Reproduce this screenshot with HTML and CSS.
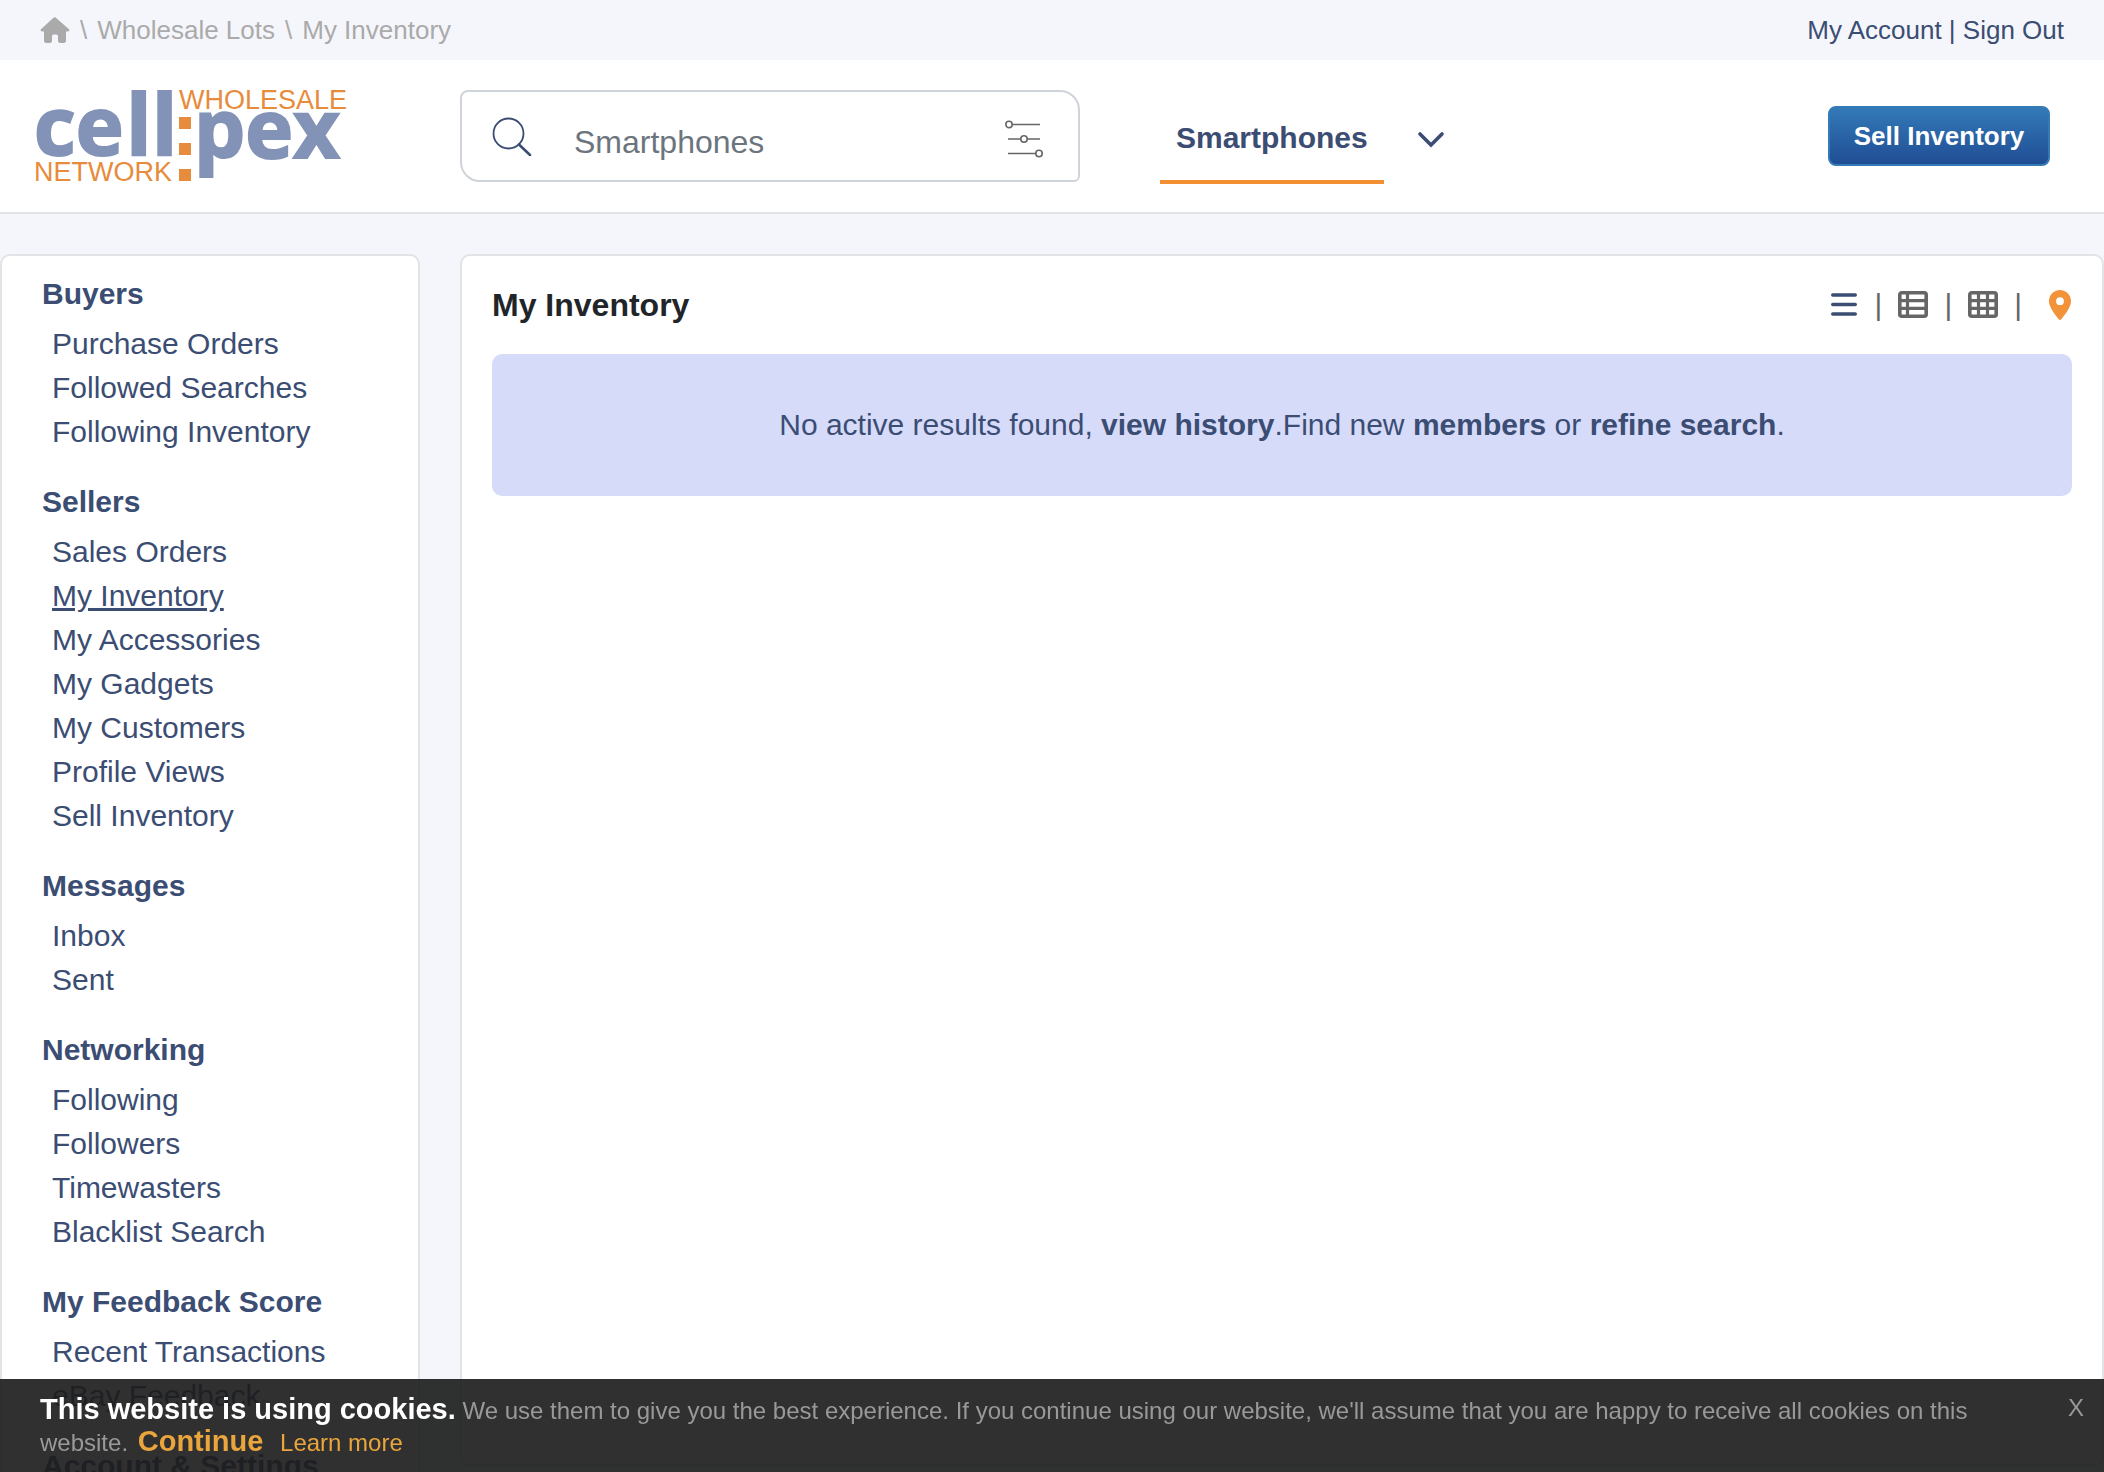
FILE: index.html
```html
<!DOCTYPE html>
<html lang="en">
<head>
<meta charset="utf-8">
<title>My Inventory - Cellpex</title>
<link rel="stylesheet" href="styles.css">
</head>
<body>
<div class="topbar">
  <nav class="crumbs" aria-label="Breadcrumb">
    <a href="#" aria-label="Home"><svg class="home" width="30" height="28" viewBox="0 0 30 28"><path d="M15 1 29.300 13.500Q30 15 28 15.500H26V24.500Q26 27 23.500 27H20.500Q18 27 18 24.500V20Q18 18.500 16.500 18.500H13.500Q12 18.500 12 20V24.500Q12 27 9.500 27H6.500Q4 27 4 24.500V15.500H2Q0 15 .7 13.500L13.500 1.800Q15 .5 16.500 1.800Z"/></svg></a>
    <span>\</span>
    <a href="#">Wholesale Lots</a>
    <span>\</span>
    <span>My Inventory</span>
  </nav>
  <div class="account"><a href="#">My Account</a> | <a href="#">Sign Out</a></div>
</div>

<header class="header">
  <a class="logo" href="#" aria-label="Cellpex Wholesale Network">
    <svg width="310" height="94" viewBox="0 0 310 94">
      <g class="logo-name">
        <text x="-2" y="65" font-size="81">ce</text>
        <text x="90" y="65" font-size="84">ll</text>
        <text x="158" y="68" font-size="81">pex</text>
      </g>
      <g class="logo-tag">
        <text x="143" y="19">WHOLESALE</text>
        <text x="-2" y="91">NETWORK</text>
        <path d="M143 27h12v12h-12zM143 53h12v12h-12zM143 79h12v12h-12z"/>
      </g>
    </svg>
  </a>
  <form class="search">
    <button type="button" aria-label="Search"><svg width="40" height="40" viewBox="0 0 40 40" fill="none" stroke="#3b4d73"><circle cx="16.500" cy="17.500" r="15" stroke-width="1.800"/><path d="M27 28.500 38 39" stroke-width="2.600" stroke-linecap="round"/></svg></button>
    <input type="text" placeholder="Smartphones" aria-label="Search smartphones">
    <button type="button" aria-label="Filters"><svg width="40" height="46" viewBox="0 -6 40 46" fill="none" stroke="#666" stroke-width="1.600"><path d="M8.500 5.500H36M4 20h13M23 20h13M4 34.500h28"/><circle cx="5" cy="5.500" r="3.200"/><circle cx="20" cy="20" r="3.200"/><circle cx="35" cy="34.500" r="3.200"/></svg></button>
  </form>
  <nav class="category">
    <a class="tab" href="#">Smartphones</a>
    <button type="button" aria-label="More categories"><svg width="28" height="18" viewBox="0 0 28 18" fill="none" stroke="#3b4d73" stroke-width="3.600" stroke-linecap="round"><path d="M3 3 14 14 25 3"/></svg></button>
  </nav>
  <button class="sell" type="button">Sell Inventory</button>
</header>

<div class="content">
  <aside class="panel sidebar">
    <section><h2>Buyers</h2>
      <ul><li><a href="#">Purchase Orders</a></li><li><a href="#">Followed Searches</a></li><li><a href="#">Following Inventory</a></li></ul></section>
    <section><h2>Sellers</h2>
      <ul><li><a href="#">Sales Orders</a></li><li><a class="current" href="#">My Inventory</a></li><li><a href="#">My Accessories</a></li><li><a href="#">My Gadgets</a></li><li><a href="#">My Customers</a></li><li><a href="#">Profile Views</a></li><li><a href="#">Sell Inventory</a></li></ul></section>
    <section><h2>Messages</h2>
      <ul><li><a href="#">Inbox</a></li><li><a href="#">Sent</a></li></ul></section>
    <section><h2>Networking</h2>
      <ul><li><a href="#">Following</a></li><li><a href="#">Followers</a></li><li><a href="#">Timewasters</a></li><li><a href="#">Blacklist Search</a></li></ul></section>
    <section><h2>My Feedback Score</h2>
      <ul><li><a href="#">Recent Transactions</a></li><li><a href="#">eBay Feedback</a></li></ul></section>
    <section><h2>Account &amp; Settings</h2></section>
  </aside>

  <main class="panel main">
    <div class="title-row">
      <h1>My Inventory</h1>
      <div class="views">
        <button type="button" aria-label="List view"><svg width="30" height="30" viewBox="0 0 30 30" stroke="#3b4d73" stroke-width="3.600" stroke-linecap="round"><path d="M3.800 5H26.200M3.800 14.500H26.200M3.800 24H26.200"/></svg></button>
        <span>|</span>
        <button type="button" aria-label="Table view"><svg width="30" height="30" viewBox="0 0 30 30" fill="none" stroke="#666"><rect x="1.800" y="2.800" width="26.400" height="23.400" rx="2" stroke-width="3.600"/><path d="M9.500 3V26M2 10.600H28M2 18.400H28" stroke-width="3.200"/></svg></button>
        <span>|</span>
        <button type="button" aria-label="Grid view"><svg width="30" height="30" viewBox="0 0 30 30" fill="none" stroke="#666"><rect x="1.800" y="2.800" width="26.400" height="23.400" rx="2" stroke-width="3.600"/><path d="M10.500 3V26M19.500 3V26M2 10.600H28M2 18.400H28" stroke-width="3.200"/></svg></button>
        <span>|</span>
        <button class="pin" type="button" aria-label="Map view"><svg width="24" height="30" viewBox="0 0 24 30"><path fill="#f2933a" fill-rule="evenodd" d="M12 0C18.300 0 23 5 23 11.200 23 17 17.500 24 13.300 29.200Q12 30.700 10.700 29.200C6.500 24 1 17 1 11.200 1 5 5.700 0 12 0ZM12 7.300A3.900 3.900 0 1 0 12 15.100 3.900 3.900 0 1 0 12 7.300Z"/></svg></button>
      </div>
    </div>
    <p class="notice">No active results found, <a href="#">view history</a>.Find new <a href="#">members</a> or <a href="#">refine search</a>.</p>
  </main>
</div>

<div class="cookies" role="dialog" aria-label="Cookie notice">
  <p><strong>This website is using cookies.</strong> We use them to give you the best experience. If you continue using our website, we'll assume that you are happy to receive all cookies on this website. <a class="go" href="#">Continue</a> <a class="learn" href="#">Learn more</a></p>
  <button type="button" aria-label="Close">X</button>
</div>
</body>
</html>
```
FILE: styles.css
```css
* { box-sizing: border-box; }
body {
  margin: 0;
  height: 100vh;
  overflow: hidden;
  display: flex;
  flex-direction: column;
  background: #f5f6fb;
  color: #3b4d73;
  font: 30px/44px Arial, "Liberation Sans", sans-serif;
}
a { color: inherit; text-decoration: none; }
button {
  padding: 0;
  border: 0;
  background: none;
  color: inherit;
  font: inherit;
  cursor: pointer;
}
svg { display: block; }
h1, h2, p, ul { margin: 0; padding: 0; }
ul { list-style: none; }

.topbar {
  display: flex;
  flex: none;
  align-items: center;
  justify-content: space-between;
  height: 60px;
  padding: 0 40px;
  font-size: 26px;
}
.crumbs { display: flex; align-items: center; gap: 10px; color: #aaa; }
.home { fill: #aaa; }

.header {
  display: flex;
  flex: none;
  align-items: center;
  height: 154px;
  padding: 0 54px 0 36px;
  background: #fff;
  border-bottom: 2px solid #e2e3e5;
}
.logo { width: 424px; padding-top: 2px; }
.logo svg { overflow: visible; }
.logo-name {
  fill: #8293b7;
  stroke: #8293b7;
  stroke-width: 2px;
  font-family: "Open Sans", "Noto Sans", sans-serif;
  font-weight: bold;
}
.logo-tag { fill: #e78b3c; font-size: 27px; }
.search {
  display: flex;
  align-items: center;
  width: 620px;
  height: 92px;
  padding: 0 34px 0 30px;
  border: 2px solid #ced4da;
  border-radius: 8px 20px 6px 20px;
}
.search input {
  flex: 1;
  min-width: 0;
  padding: 12px 0 0 42px;
  border: 0;
  outline: 0;
  background: none;
  color: #3b4d73;
  font: inherit;
  font-size: 32px;
}
.search input::placeholder { color: #6c757d; opacity: 1; }
.category { display: flex; align-items: center; gap: 33px; margin: 8px 0 0 80px; }
.tab {
  padding: 20px 16px;
  border-bottom: 4px solid #f28f33;
  font-weight: bold;
}
.sell {
  width: 222px;
  height: 60px;
  margin: 0 0 0 auto;
  border: 2px solid #337ab7;
  border-radius: 8px;
  background: linear-gradient(#337ab7, #204d95);
  color: #fff;
  font-size: 26px;
  font-weight: bold;
}

.content {
  display: flex;
  flex: 1;
  align-items: flex-start;
  gap: 40px;
  min-height: 0;
  padding-top: 40px;
}
.panel { background: #fff; border: 2px solid #e2e3e5; border-radius: 10px; }
.sidebar { flex: none; width: 420px; padding: 16px 40px; }
.sidebar section { margin-bottom: 26px; }
.sidebar h2 { margin-bottom: 6px; font-size: 30px; line-height: 44px; }
.sidebar li { padding-left: 10px; }
.current { text-decoration: underline; }
.main { flex: 1; height: calc(100% - 6px); padding: 27px 30px; }
.title-row { display: flex; align-items: center; justify-content: space-between; margin-bottom: 27px; }
h1 { color: #212529; font-size: 32px; line-height: 44px; }
.views { display: flex; align-items: center; gap: 16px; color: #666; }
.pin { margin-left: 10px; }
.notice {
  padding: 49px 20px;
  border-radius: 10px;
  background: #d7dbfa;
  text-align: center;
}
.notice a { font-weight: bold; }

.cookies {
  position: fixed;
  inset: auto 0 0;
  display: flex;
  align-items: flex-start;
  justify-content: space-between;
  gap: 60px;
  padding: 15px 20px 14px 40px;
  background: rgba(28, 28, 28, .91);
  color: #999;
  font-size: 24px;
  line-height: 31px;
}
.cookies strong { color: #fff; font-size: 29px; }
.cookies a { color: #eaa53c; }
.cookies .go { margin: 0 10px 0 3px; font-size: 29px; font-weight: bold; }
.cookies button { line-height: 28px; }
```
